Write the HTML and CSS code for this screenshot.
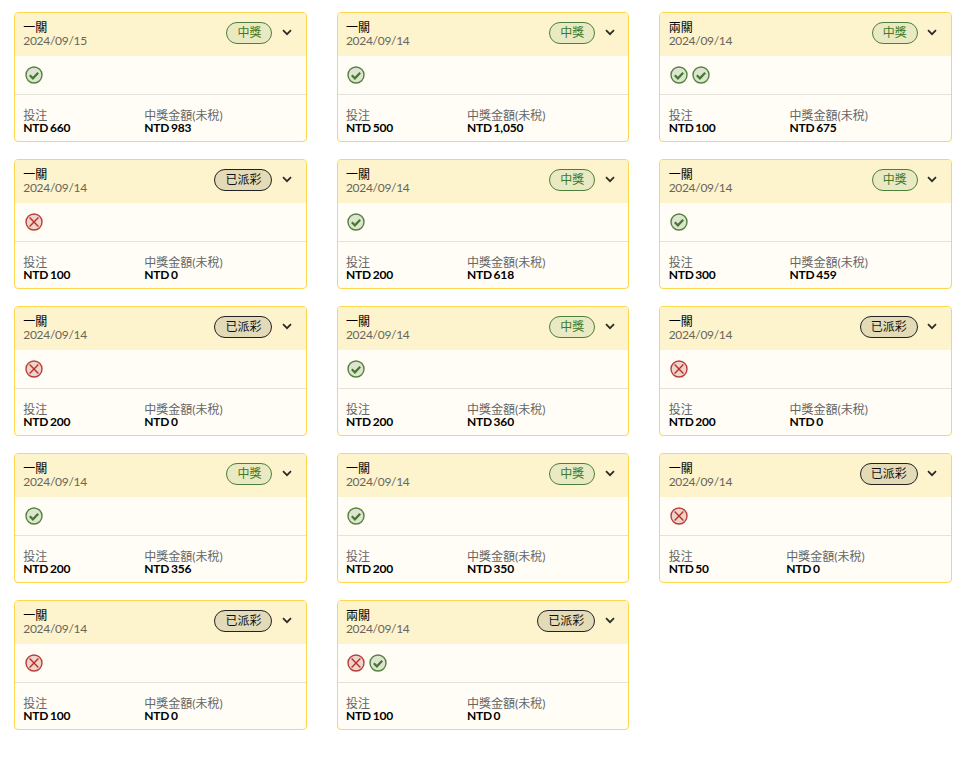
FILE: index.html
```html
<!DOCTYPE html>
<html lang="zh-Hant">
<head>
<meta charset="utf-8">
<title>注單</title>
<link rel="stylesheet" href="styles.css">
</head>
<body>
<svg class="defs" width="0" height="0" aria-hidden="true">
<symbol id="win" viewBox="0 0 18 18"><circle cx="9" cy="9" r="8" fill="#dde4d0" stroke="#54833f" stroke-width="1.4"/><path d="M4.8 9.2 7.9 12.3l5.3-5.6" fill="none" stroke="#44782f" stroke-width="2.2"/></symbol>
<symbol id="lose" viewBox="0 0 18 18"><circle cx="9" cy="9" r="8" fill="#eed4cb" stroke="#b8403a" stroke-width="1.4"/><path d="M4.6 4.6 13.4 13.4M13.4 4.6 4.6 13.4" fill="none" stroke="#b8322c" stroke-width="1.4"/></symbol>
<symbol id="chev" viewBox="0 0 10 7"><path d="M1 1.2 5 5.2 9 1.2" fill="none" stroke="#2a2a2a" stroke-width="1.7"/></symbol>
</svg>
<main class="grid">

<article class="card"><header class="head"><div class="title"><div class="name">一關</div><div class="date">2024/09/15</div></div><span class="pill won">中獎</span><svg class="chev"><use href="#chev"/></svg></header>
<div class="legs"><svg class="leg"><use href="#win"/></svg></div>
<div class="stats"><div class="stat"><div class="label">投注</div><div class="value">NTD 660</div></div><div class="stat"><div class="label">中獎金額(未稅)</div><div class="value">NTD 983</div></div></div></article>

<article class="card"><header class="head"><div class="title"><div class="name">一關</div><div class="date">2024/09/14</div></div><span class="pill won">中獎</span><svg class="chev"><use href="#chev"/></svg></header>
<div class="legs"><svg class="leg"><use href="#win"/></svg></div>
<div class="stats"><div class="stat"><div class="label">投注</div><div class="value">NTD 500</div></div><div class="stat"><div class="label">中獎金額(未稅)</div><div class="value">NTD 1,050</div></div></div></article>

<article class="card"><header class="head"><div class="title"><div class="name">兩關</div><div class="date">2024/09/14</div></div><span class="pill won">中獎</span><svg class="chev"><use href="#chev"/></svg></header>
<div class="legs"><svg class="leg"><use href="#win"/></svg><svg class="leg"><use href="#win"/></svg></div>
<div class="stats"><div class="stat"><div class="label">投注</div><div class="value">NTD 100</div></div><div class="stat"><div class="label">中獎金額(未稅)</div><div class="value">NTD 675</div></div></div></article>

<article class="card"><header class="head"><div class="title"><div class="name">一關</div><div class="date">2024/09/14</div></div><span class="pill paid">已派彩</span><svg class="chev"><use href="#chev"/></svg></header>
<div class="legs"><svg class="leg"><use href="#lose"/></svg></div>
<div class="stats"><div class="stat"><div class="label">投注</div><div class="value">NTD 100</div></div><div class="stat"><div class="label">中獎金額(未稅)</div><div class="value">NTD 0</div></div></div></article>

<article class="card"><header class="head"><div class="title"><div class="name">一關</div><div class="date">2024/09/14</div></div><span class="pill won">中獎</span><svg class="chev"><use href="#chev"/></svg></header>
<div class="legs"><svg class="leg"><use href="#win"/></svg></div>
<div class="stats"><div class="stat"><div class="label">投注</div><div class="value">NTD 200</div></div><div class="stat"><div class="label">中獎金額(未稅)</div><div class="value">NTD 618</div></div></div></article>

<article class="card"><header class="head"><div class="title"><div class="name">一關</div><div class="date">2024/09/14</div></div><span class="pill won">中獎</span><svg class="chev"><use href="#chev"/></svg></header>
<div class="legs"><svg class="leg"><use href="#win"/></svg></div>
<div class="stats"><div class="stat"><div class="label">投注</div><div class="value">NTD 300</div></div><div class="stat"><div class="label">中獎金額(未稅)</div><div class="value">NTD 459</div></div></div></article>

<article class="card"><header class="head"><div class="title"><div class="name">一關</div><div class="date">2024/09/14</div></div><span class="pill paid">已派彩</span><svg class="chev"><use href="#chev"/></svg></header>
<div class="legs"><svg class="leg"><use href="#lose"/></svg></div>
<div class="stats"><div class="stat"><div class="label">投注</div><div class="value">NTD 200</div></div><div class="stat"><div class="label">中獎金額(未稅)</div><div class="value">NTD 0</div></div></div></article>

<article class="card"><header class="head"><div class="title"><div class="name">一關</div><div class="date">2024/09/14</div></div><span class="pill won">中獎</span><svg class="chev"><use href="#chev"/></svg></header>
<div class="legs"><svg class="leg"><use href="#win"/></svg></div>
<div class="stats"><div class="stat"><div class="label">投注</div><div class="value">NTD 200</div></div><div class="stat"><div class="label">中獎金額(未稅)</div><div class="value">NTD 360</div></div></div></article>

<article class="card"><header class="head"><div class="title"><div class="name">一關</div><div class="date">2024/09/14</div></div><span class="pill paid">已派彩</span><svg class="chev"><use href="#chev"/></svg></header>
<div class="legs"><svg class="leg"><use href="#lose"/></svg></div>
<div class="stats"><div class="stat"><div class="label">投注</div><div class="value">NTD 200</div></div><div class="stat"><div class="label">中獎金額(未稅)</div><div class="value">NTD 0</div></div></div></article>

<article class="card"><header class="head"><div class="title"><div class="name">一關</div><div class="date">2024/09/14</div></div><span class="pill won">中獎</span><svg class="chev"><use href="#chev"/></svg></header>
<div class="legs"><svg class="leg"><use href="#win"/></svg></div>
<div class="stats"><div class="stat"><div class="label">投注</div><div class="value">NTD 200</div></div><div class="stat"><div class="label">中獎金額(未稅)</div><div class="value">NTD 356</div></div></div></article>

<article class="card"><header class="head"><div class="title"><div class="name">一關</div><div class="date">2024/09/14</div></div><span class="pill won">中獎</span><svg class="chev"><use href="#chev"/></svg></header>
<div class="legs"><svg class="leg"><use href="#win"/></svg></div>
<div class="stats"><div class="stat"><div class="label">投注</div><div class="value">NTD 200</div></div><div class="stat"><div class="label">中獎金額(未稅)</div><div class="value">NTD 350</div></div></div></article>

<article class="card"><header class="head"><div class="title"><div class="name">一關</div><div class="date">2024/09/14</div></div><span class="pill paid">已派彩</span><svg class="chev"><use href="#chev"/></svg></header>
<div class="legs"><svg class="leg"><use href="#lose"/></svg></div>
<div class="stats"><div class="stat"><div class="label">投注</div><div class="value">NTD 50</div></div><div class="stat"><div class="label">中獎金額(未稅)</div><div class="value">NTD 0</div></div></div></article>

<article class="card"><header class="head"><div class="title"><div class="name">一關</div><div class="date">2024/09/14</div></div><span class="pill paid">已派彩</span><svg class="chev"><use href="#chev"/></svg></header>
<div class="legs"><svg class="leg"><use href="#lose"/></svg></div>
<div class="stats"><div class="stat"><div class="label">投注</div><div class="value">NTD 100</div></div><div class="stat"><div class="label">中獎金額(未稅)</div><div class="value">NTD 0</div></div></div></article>

<article class="card"><header class="head"><div class="title"><div class="name">兩關</div><div class="date">2024/09/14</div></div><span class="pill paid">已派彩</span><svg class="chev"><use href="#chev"/></svg></header>
<div class="legs"><svg class="leg"><use href="#lose"/></svg><svg class="leg"><use href="#win"/></svg></div>
<div class="stats"><div class="stat"><div class="label">投注</div><div class="value">NTD 100</div></div><div class="stat"><div class="label">中獎金額(未稅)</div><div class="value">NTD 0</div></div></div></article>

</main>
</body>
</html>
```
FILE: styles.css
```css
* { box-sizing: border-box; }
html, body { margin: 0; background: #fff; }
body { font-family: Lato, "Noto Sans CJK TC", sans-serif; font-size: 12px; color: #000; }
.defs { position: absolute; }
.grid {
  display: grid;
  grid-template-columns: repeat(3, 1fr);
  column-gap: 30px;
  row-gap: 17px;
  padding: 12px 11px 20px 14px;
}
.card {
  height: 130px;
  display: flex;
  flex-direction: column;
  background: #fffdf6;
  border: 1px solid #fdd84f;
  border-radius: 4px;
  overflow: hidden;
}
.head {
  height: 43px;
  flex: none;
  display: flex;
  align-items: center;
  padding: 0 13.5px 4px 8.3px;
  background: #fdf3cc;
}
.title { flex: 1; min-width: 0; padding-top: 3px; }
.name { font-size: 12px; line-height: 13px; color: #000; }
.date { font-size: 12px; line-height: 13px; color: #68665c; letter-spacing: -0.3px; }
.pill {
  flex: none;
  height: 22px;
  padding: 0 10px;
  border: 1px solid #222;
  border-radius: 11px;
  font-size: 12px;
  line-height: 20px;
  text-align: center;
}
.pill.won { color: #3f7a22; background: #e9e9c3; border-color: #4d7f3a; }
.pill.paid { color: #111; background: #e3dbb8; border-color: #222; }
.chev { flex: none; width: 10px; height: 7px; margin-left: 9.7px; }
.legs {
  height: 39px;
  flex: none;
  display: flex;
  align-items: center;
  gap: 4px;
  padding: 0 0 1px 9.5px;
  border-bottom: 1px solid #e4e2da;
}
.leg { width: 18px; height: 18px; }
.stats {
  display: flex;
  padding: 14px 9px 0 8.3px;
}
.stat { flex: 1 1 auto; }
.label { font-size: 12px; line-height: 13px; color: #666; }
.value { font-size: 12px; line-height: 12px; font-weight: 700; color: #000; letter-spacing: -0.2px; word-spacing: -1px; }
```
